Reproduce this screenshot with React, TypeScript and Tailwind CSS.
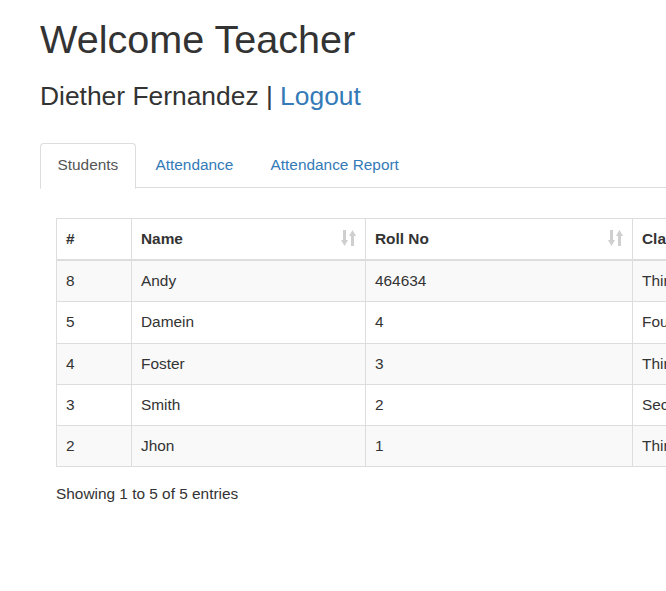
import React from "react";

const rows = [
  { id: "8", name: "Andy", roll: "464634", cls: "Third" },
  { id: "5", name: "Damein", roll: "4", cls: "Fourth" },
  { id: "4", name: "Foster", roll: "3", cls: "Third" },
  { id: "3", name: "Smith", roll: "2", cls: "Second" },
  { id: "2", name: "Jhon", roll: "1", cls: "Third" },
];

function SortIcon() {
  return (
    <svg
      width="15"
      height="16"
      viewBox="0 0 15 16"
      className="absolute right-[9px] top-[11px]"
      fill="#cfcfcf"
    >
      <rect x="2" y="0" width="3" height="11" />
      <polygon points="0,10 7,10 3.5,16" />
      <rect x="10" y="5" width="3" height="11" />
      <polygon points="8,6 15,6 11.5,0" />
    </svg>
  );
}

export default function App() {
  return (
    <div
      className="w-[666px] h-[591px] overflow-hidden bg-white text-[#333] text-[15.4px] leading-[22px]"
      style={{ fontFamily: '"Liberation Sans", Arial, sans-serif' }}
    >
      <div className="pl-[40px]">
        <h1 className="mt-[17px] text-[39.6px] leading-[44px] font-normal">Welcome Teacher</h1>
        <h3 className="mt-[21px] text-[26.4px] leading-[29px] font-normal">
          Diether Fernandez | <a className="text-[#337ab7]">Logout</a>
        </h3>

        <ul className="mt-[32px] flex border-b border-[#ddd] h-[45px]">
          <li className="mb-[-1px] mr-[2.2px]">
            <a className="block px-[16.5px] pt-[10px] pb-[12px] border border-[#ddd] border-b-white rounded-t-[4px] bg-white text-[#555]">
              Students
            </a>
          </li>
          <li className="mb-[-1px] mr-[2.2px]">
            <a className="block px-[16.5px] pt-[10px] pb-[12px] border border-transparent text-[#337ab7]">
              Attendance
            </a>
          </li>
          <li className="mb-[-1px] mr-[2.2px]">
            <a className="block px-[16.5px] pt-[10px] pb-[12px] border border-transparent text-[#337ab7]">
              Attendance Report
            </a>
          </li>
        </ul>

        <div className="pl-[16px] mt-[30px] overflow-hidden">
          <table className="border-collapse table-fixed w-[800px]">
            <colgroup>
              <col className="w-[75px]" />
              <col className="w-[234px]" />
              <col className="w-[267px]" />
              <col className="w-[224px]" />
            </colgroup>
            <thead>
              <tr>
                <th className="relative text-left font-bold border border-[#ddd] border-b-2 pl-[9px] pt-[9px] pb-[9px]">#</th>
                <th className="relative text-left font-bold border border-[#ddd] border-b-2 pl-[9px] pt-[9px] pb-[9px]">
                  Name
                  <SortIcon />
                </th>
                <th className="relative text-left font-bold border border-[#ddd] border-b-2 pl-[9px] pt-[9px] pb-[9px]">
                  Roll No
                  <SortIcon />
                </th>
                <th className="relative text-left font-bold border border-[#ddd] border-b-2 pl-[9px] pt-[9px] pb-[9px]">
                  Class
                  <SortIcon />
                </th>
              </tr>
            </thead>
            <tbody>
              {rows.map((r, i) => (
                <tr key={r.id} className={i % 2 === 0 ? "bg-[#f9f9f9]" : "bg-white"}>
                  <td className="border border-[#ddd] px-[9px] py-[9.15px]">{r.id}</td>
                  <td className="border border-[#ddd] px-[9px] py-[9.15px]">{r.name}</td>
                  <td className="border border-[#ddd] px-[9px] py-[9.15px]">{r.roll}</td>
                  <td className="border border-[#ddd] px-[9px] py-[9.15px]">{r.cls}</td>
                </tr>
              ))}
            </tbody>
          </table>
          <div className="mt-[16px]">Showing 1 to 5 of 5 entries</div>
        </div>
      </div>
    </div>
  );
}
